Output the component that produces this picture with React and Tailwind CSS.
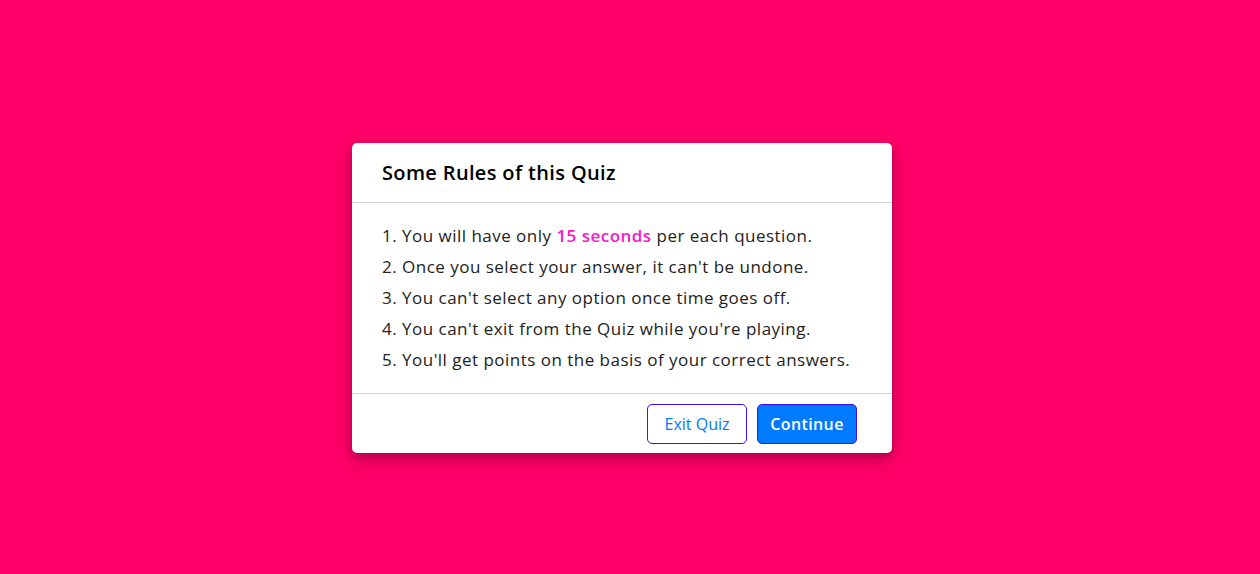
import React from 'react'

const rules = [
  <>1. You will have only <span className="font-semibold text-[#f816c8]">15 seconds</span> per each question.</>,
  <>2. Once you select your answer, it can't be undone.</>,
  <>3. You can't select any option once time goes off.</>,
  <>4. You can't exit from the Quiz while you're playing.</>,
  <>5. You'll get points on the basis of your correct answers.</>,
]

export default function App() {
  return (
    <div className="w-full h-[574px] bg-[#ff0068] flex justify-center items-start pt-[143px] pr-4 font-['Open_Sans',sans-serif]">
      <div className="w-[540px] bg-white rounded-[5px] shadow-[0_4px_8px_0_rgba(0,0,0,0.2),0_6px_20px_0_rgba(0,0,0,0.19)]">
        <div className="h-[60px] flex items-center px-[30px] border-b border-[#d3d3d3] text-[20px] font-semibold tracking-[0.35px] text-black">
          Some Rules of this Quiz
        </div>
        <div className="px-[30px] py-[15px] text-[#222] tracking-[0.48px]">
          {rules.map((r, i) => (
            <div key={i} className="my-[5px] text-[17px] leading-[26px]">{r}</div>
          ))}
        </div>
        <div className="h-[60px] flex items-center justify-end px-[30px] border-t border-[#d3d3d3]">
          <button className="mx-[5px] h-10 w-[100px] rounded-[5px] border border-[#3b0bff] text-[#007bff] text-base font-medium bg-white">
            Exit Quiz
          </button>
          <button className="mx-[5px] h-10 w-[100px] rounded-[5px] border border-[#3b0bff] bg-[#007bff] text-white text-base font-semibold tracking-[0.4px]">
            Continue
          </button>
        </div>
      </div>
    </div>
  )
}
